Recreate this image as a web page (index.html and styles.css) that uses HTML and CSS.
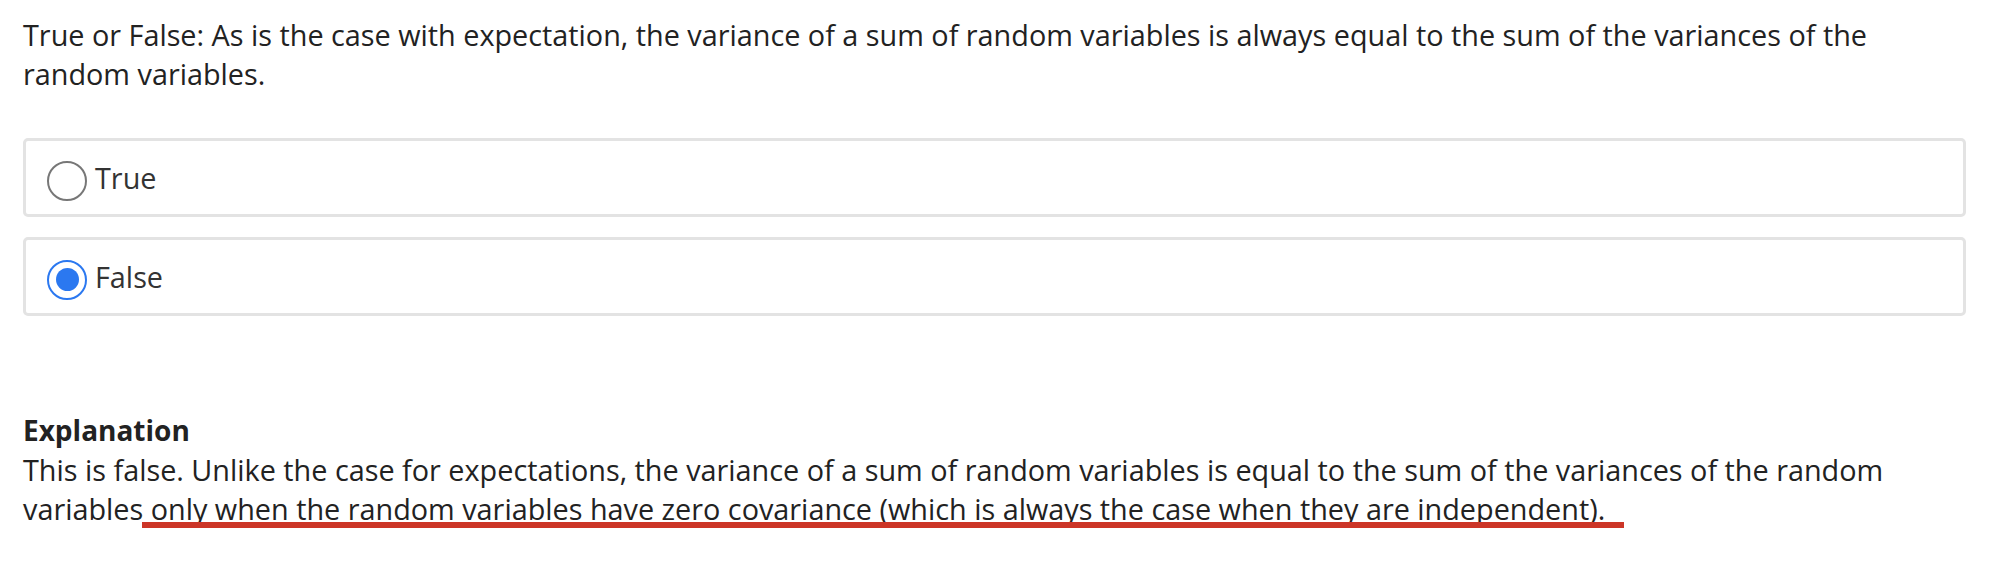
FILE: index.html
```html
<!DOCTYPE html>
<html>
<head>
<meta charset="utf-8">
<link rel="stylesheet" href="styles.css">
</head>
<body>
<div class="page">
  <p class="question">True or False: As is the case with expectation, the variance of a sum of random variables is always equal to the sum of the variances of the random variables.</p>
  <div class="options">
    <label class="option">
      <span class="radio"></span>
      <span class="option-text">True</span>
    </label>
    <label class="option">
      <span class="radio checked"></span>
      <span class="option-text">False</span>
    </label>
  </div>
  <div class="explanation">
    <div class="exp-title">Explanation</div>
    <p class="exp-text">This is false. Unlike the case for expectations, the variance of a sum of random variables is equal to the sum of the variances of the random variables only when the random variables have zero covariance (which is always the case when they are independent).</p>
    <div class="underline-mark"></div>
  </div>
</div>
</body>
</html>
```

FILE: styles.css
```css
html, body {
  margin: 0;
  padding: 0;
  background: #ffffff;
}
.page {
  padding: 15px 24px 0 23px;
  font-family: "Open Sans", "Noto Sans", sans-serif;
  font-size: 28.8px;
  line-height: 39px;
  color: #222222;
}
.question {
  margin: 0;
}
.options {
  margin-top: 45px;
  display: flex;
  flex-direction: column;
  gap: 20px;
}
.option {
  display: flex;
  align-items: center;
  height: 73px;
  border: 3px solid #e3e3e3;
  border-radius: 5px;
  padding-left: 21px;
  gap: 8px;
  color: #333333;
}
.radio {
  width: 36px;
  height: 36px;
  border: 2px solid #777777;
  border-radius: 50%;
  box-sizing: content-box;
  display: flex;
  align-items: center;
  justify-content: center;
  margin-top: 6px;
}
.radio.checked {
  border-color: #2b78f0;
}
.radio.checked::before {
  content: "";
  width: 23px;
  height: 23px;
  border-radius: 50%;
  background: #2b78f0;
}
.option-text {
  line-height: 39px;
}
.explanation {
  margin-top: 95px;
  position: relative;
}
.exp-title {
  font-weight: 700;
  font-size: 28px;
}
.exp-text {
  margin: 0;
}
.underline-mark {
  position: absolute;
  left: 119px;
  top: 111px;
  width: 1482px;
  height: 6px;
  background: #cc3527;
}
```
